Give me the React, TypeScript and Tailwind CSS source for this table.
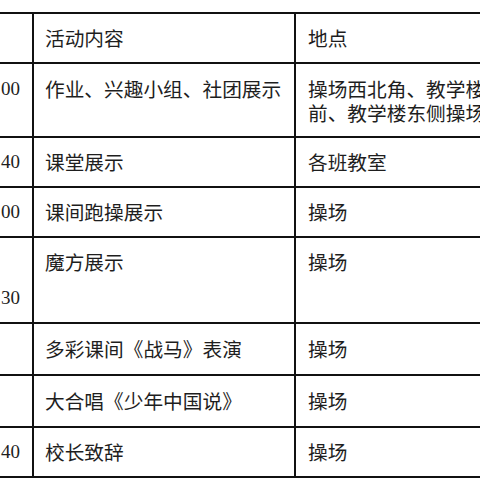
import React from "react";

type Row = {
  h: string;
  time: string;
  timePad: string;
  act: string;
  place: string[];
  pad: string;
};

const cjk = { fontFamily: '"Noto Sans CJK SC", "Noto Sans", sans-serif' };
const serif = { fontFamily: '"Liberation Serif", "Times New Roman", serif' };

const rows: Row[] = [
  { h: "h-[74px]", time: "00", timePad: "justify-start pt-[13px]", act: "作业、兴趣小组、社团展示", place: ["操场西北角、教学楼", "前、教学楼东侧操场"], pad: "justify-start pt-[13px]" },
  { h: "h-[50px]", time: "40", timePad: "justify-center", act: "课堂展示", place: ["各班教室"], pad: "justify-center" },
  { h: "h-[50px]", time: "00", timePad: "justify-center", act: "课间跑操展示", place: ["操场"], pad: "justify-center" },
  { h: "h-[86px]", time: "30", timePad: "justify-start pt-[48px]", act: "魔方展示", place: ["操场"], pad: "justify-start pt-[12px]" },
  { h: "h-[52px]", time: "", timePad: "justify-center", act: "多彩课间《战马》表演", place: ["操场"], pad: "justify-center" },
  { h: "h-[52px]", time: "", timePad: "justify-center", act: "大合唱《少年中国说》", place: ["操场"], pad: "justify-center" },
  { h: "h-[50px]", time: "40", timePad: "justify-center", act: "校长致辞", place: ["操场"], pad: "justify-center" },
];

export default function App() {
  return (
    <div className="w-[480px] h-[480px] bg-white overflow-hidden pt-[12px] text-[#1e1e1e]">
      <div className="w-[560px] border-t-2 border-[#111]">
        <div className="flex h-[50px] border-b-2 border-[#111]">
          <div className="w-[34px] shrink-0 border-r-2 border-[#111]" />
          <div
            className="w-[262px] shrink-0 border-r-2 border-[#111] flex items-center pl-[11px] text-[19.7px] leading-[24px]"
            style={cjk}
          >
            活动内容
          </div>
          <div className="flex-1 flex items-center pl-[12px] text-[19.7px] leading-[24px]" style={cjk}>
            地点
          </div>
        </div>
        {rows.map((r, i) => (
          <div key={i} className={`flex ${r.h} border-b-2 border-[#111]`}>
            <div
              className={`w-[34px] shrink-0 border-r-2 border-[#111] flex flex-col items-end pr-[12px] text-[19px] leading-[24px] ${r.timePad}`}
              style={serif}
            >
              {r.time && <span>{r.time}</span>}
            </div>
            <div
              className={`w-[262px] shrink-0 border-r-2 border-[#111] flex flex-col pl-[11px] text-[19.7px] leading-[24px] whitespace-nowrap ${r.pad}`}
              style={cjk}
            >
              <span>{r.act}</span>
            </div>
            <div
              className={`flex-1 flex flex-col pl-[12px] text-[19.7px] leading-[24px] whitespace-nowrap ${r.pad}`}
              style={cjk}
            >
              {r.place.map((p, j) => (
                <span key={j}>{p}</span>
              ))}
            </div>
          </div>
        ))}
      </div>
    </div>
  );
}
